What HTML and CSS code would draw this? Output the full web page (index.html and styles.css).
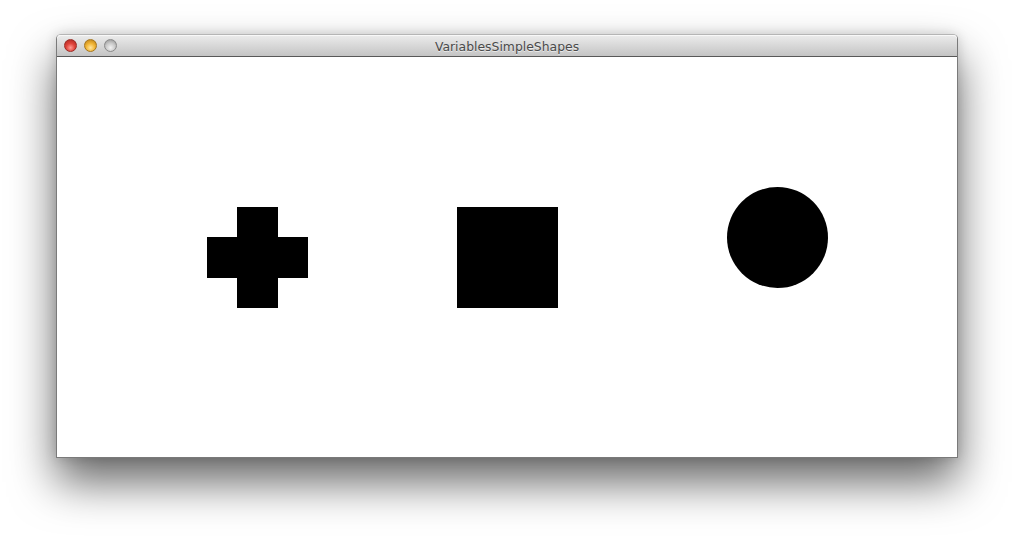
FILE: index.html
```html
<!DOCTYPE html>
<html>
<head>
<meta charset="utf-8">
<link rel="stylesheet" href="styles.css">
</head>
<body>
<div class="window">
  <div class="titlebar">
    <div class="lights">
      <span class="light red"></span>
      <span class="light yellow"></span>
      <span class="light gray"></span>
    </div>
    <div class="title">VariablesSimpleShapes</div>
  </div>
  <div class="canvas">
    <svg width="900" height="400" viewBox="0 0 900 400">
      <g shape-rendering="crispEdges" fill="#000">
        <rect x="180" y="150" width="41" height="101"/>
        <rect x="150" y="180" width="101" height="41"/>
        <rect x="400" y="150" width="101" height="101"/>
      </g>
      <circle cx="720.5" cy="180.5" r="50.5" fill="#000"/>
    </svg>
  </div>
</div>
</body>
</html>
```
FILE: styles.css
```css
html, body {
  margin: 0;
  padding: 0;
  background: #fff;
}
body {
  width: 1014px;
  height: 536px;
  overflow: hidden;
}
.window {
  margin: 34px 0 0 56px;
  width: 900px;
  border: 1px solid #7a7a7a;
  border-top-color: #b5b5b5;
  border-radius: 5px 5px 0 0;
  box-shadow: 0 24px 45px rgba(0,0,0,0.6), 0 0 12px rgba(0,0,0,0.15);
  background: #fff;
}
.titlebar {
  position: relative;
  height: 21px;
  border-bottom: 1px solid #585858;
  border-radius: 4px 4px 0 0;
  background: linear-gradient(#ececec, #d8d8d8 50%, #c4c4c4);
  box-shadow: inset 0 1px 0 #f8f8f8;
  display: flex;
  align-items: center;
  justify-content: center;
}
.lights {
  position: absolute;
  left: 7px;
  top: 4px;
  display: flex;
  gap: 7px;
}
.light {
  width: 13px;
  height: 13px;
  border-radius: 50%;
  box-sizing: border-box;
}
.red {
  background: radial-gradient(circle at 50% 70%, #ff9b93 0%, #e0443b 45%, #a8231d 100%);
  border: 1px solid #9b2b25;
}
.yellow {
  background: radial-gradient(circle at 50% 70%, #ffe6a0 0%, #f2b637 45%, #b57a14 100%);
  border: 1px solid #a6761c;
}
.gray {
  background: radial-gradient(circle at 50% 70%, #f2f2f2 0%, #c8c8c8 50%, #8e8e8e 100%);
  border: 1px solid #8a8a8a;
}
.title {
  font-family: "DejaVu Sans", sans-serif;
  font-size: 12.4px;
  color: #4a4a4a;
  text-shadow: 0 1px 0 rgba(255,255,255,0.6);
  margin-top: 1px;
}
.canvas {
  height: 400px;
  background: #fff;
}
.canvas svg {
  display: block;
}
```
